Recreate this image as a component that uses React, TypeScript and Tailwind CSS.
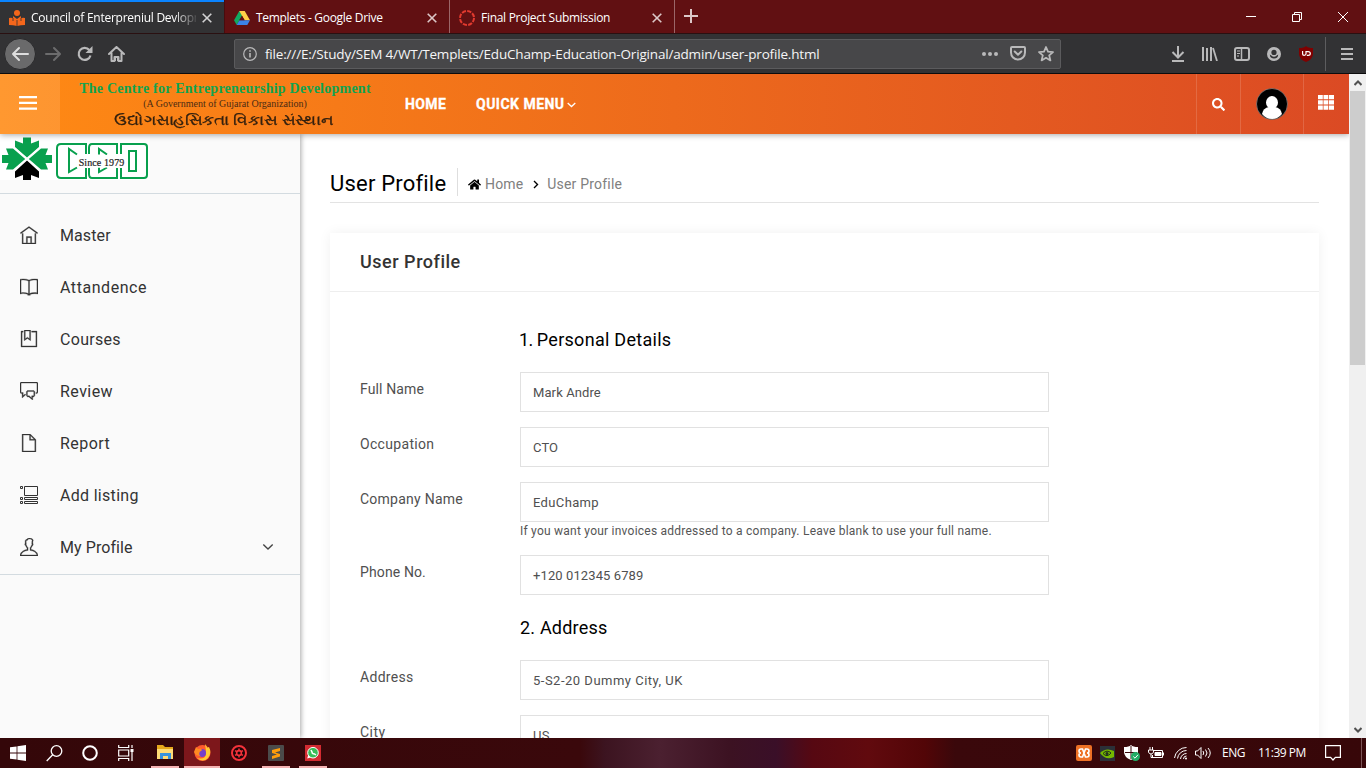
import React from "react";
import { TfiHome, TfiBook, TfiBookmarkAlt, TfiComments, TfiFile, TfiUser } from "react-icons/tfi";
import { FaHome, FaSearch } from "react-icons/fa";

function ListIcon({ className = "" }: { size?: number; className?: string }) {
  return (
    <svg className={className} width="18" height="18" viewBox="0 0 18 18" fill="none" stroke="currentColor" strokeWidth="1">
      <path d="M4.500 .5h13v9h-13zM.5 .5h2v2h-2zM.5 11.500h2v2h-2zM4.500 11.500h13v2h-13zM.5 15.500h2v2h-2zM4.500 15.500h13v2h-13z" />
    </svg>
  );
}

const nav = [
  { label: "Master", Icon: TfiHome, cls: "tracking-[0.1px]" },
  { label: "Attandence", Icon: TfiBook, cls: "tracking-[0.55px]" },
  { label: "Courses", Icon: TfiBookmarkAlt, cls: "tracking-[0.3px]" },
  { label: "Review", Icon: TfiComments, cls: "tracking-[0.45px]" },
  { label: "Report", Icon: TfiFile, cls: "tracking-[0.45px]" },
  { label: "Add listing", Icon: ListIcon, cls: "tracking-[0.3px]" },
  { label: "My Profile", Icon: TfiUser, cls: "tracking-[0.08px]" },
];

function X({ className = "" }: { className?: string }) {
  return (
    <svg className={className} width="10" height="10" viewBox="0 0 10 10" stroke="currentColor" strokeWidth="1.6">
      <path d="M.7.7l8.6 8.6M9.3.7L.7 9.3" />
    </svg>
  );
}

function Tabs() {
  return (
    <div className="flex h-[33px] bg-[#611012] text-[12px] leading-none text-white">
      <div className="flex w-[224px] items-center border-t-2 border-[#0a84ff] bg-[#323234] pl-[9px]">
        <svg width="16" height="16" viewBox="0 0 16 16" fill="#f4661b">
          <circle cx="8" cy="3" r="3" />
          <path d="M0 8q4-.8 8 2 4-2.800 8-2v7q-4 0-8 1-4-1-8-1z" />
          <path d="M4 6l4 3 4-3v4l-4 2-4-2z" />
          <path d="M8 10v6M4 8v3M12 8v3" stroke="#323234" strokeWidth=".8" />
        </svg>
        <span className="ml-1.5 w-[165px] overflow-hidden whitespace-nowrap py-1 tracking-[-0.26px] [mask-image:linear-gradient(to_right,black_143px,transparent_168px)]">Council of Enterpreniul Devlopment</span>
        <X className="ml-[6px] text-[#d2d2d3]" />
      </div>
      <div className="flex w-[225px] items-center border-l border-[#4a0b0d] pl-[9px] pt-0.5">
        <svg width="16" height="14" viewBox="0 0 16 14">
          <path d="M5.300 0h5.400L5.500 9 2.700 14 0 9.300z" fill="#11a861" />
          <path d="M5.300 0h5.400L16 9.300h-5.400z" fill="#ffcf48" />
          <path d="M5.400 9.300H16L13.300 14H2.700z" fill="#3b82e8" />
          <path d="M5.300 9.300L8 4.700l2.700 4.600z" fill="#611012" />
        </svg>
        <span className="ml-1.5 w-[171px] whitespace-nowrap tracking-[-0.3px]">Templets - Google Drive</span>
        <X className="text-[#dcc8c8]" />
      </div>
      <div className="flex w-[226px] items-center border-x border-[#9b6668] pl-[9px] pt-0.5">
        <svg width="16" height="16" viewBox="0 0 16 16" fill="none">
          <circle cx="8" cy="8" r="7" stroke="#e23a2f" strokeWidth="2" strokeDasharray="4.200 1.298" />
        </svg>
        <span className="ml-1.5 w-[171px] whitespace-nowrap tracking-[-0.29px]">Final Project Submission</span>
        <X className="text-[#dcc8c8]" />
      </div>
      <svg className="ml-[9px] mt-[9px]" width="14" height="14" viewBox="0 0 14 14" stroke="#dcc8c8" strokeWidth="2"><path d="M7 0v14M0 7h14" /></svg>
      <div className="ml-auto flex items-center gap-[36px] pr-[18px] pt-px">
        <svg width="10" height="10" stroke="white"><path d="M0 4.500h10" /></svg>
        <svg width="10" height="10" fill="none" stroke="white"><path d="M.5 2.500h7v7h-7zM2.500 2.500v-2h7v7h-2" /></svg>
        <svg width="10" height="10" stroke="white"><path d="M0 0l10 10M10 0L0 10" /></svg>
      </div>
    </div>
  );
}

function Toolbar() {
  return (
    <div className="flex h-[41px] items-center border-b border-t border-b-[#0c0c0d] border-t-[#2a1011] bg-[#323234] text-[#b9b9ba]">
      <div className="ml-1 flex size-8 items-center justify-center rounded-full border border-[#29292b] bg-[#6a6a6b] text-[#dedede]">
        <svg width="18" height="16" viewBox="0 0 18 16" fill="none" stroke="currentColor" strokeWidth="2" strokeLinecap="round" strokeLinejoin="round"><path d="M17 8H2M8 2L2 8l6 6" /></svg>
      </div>
      <svg className="ml-[9px] text-[#6c6c6d]" width="16" height="16" viewBox="0 0 16 16" fill="none" stroke="currentColor" strokeWidth="2" strokeLinecap="round" strokeLinejoin="round"><path d="M1 8h13M9 2l6 6-6 6" /></svg>
      <svg className="ml-4" width="16" height="16" viewBox="0 0 16 16" fill="none" stroke="currentColor" strokeWidth="2.200"><path d="M13.500 9.500A6 6 0 1 1 12.300 4" /><path d="M15.500 0v7H8.500z" fill="currentColor" stroke="none" /></svg>
      <svg className="ml-[15px]" width="17" height="16" viewBox="0 0 17 16" fill="none" stroke="currentColor" strokeWidth="2" strokeLinejoin="round"><path d="M1 8l7.500-7L16 8M3.500 7v8h3v-4h4v4h3V7" strokeLinecap="round" /><path d="M7.500 15v-4h2v4" strokeWidth="1" /></svg>
      <div className="ml-[109px] flex h-[30px] w-[827px] items-center rounded-[2px] border border-[#5b5b5d] bg-[#474749] pl-2">
        <svg width="14" height="14" viewBox="0 0 14 14" fill="none" stroke="#b9b9ba" strokeWidth="1.200"><circle cx="7" cy="7" r="6.300" /><path d="M7 6v4.500M7 3.200v1.600" strokeWidth="1.600" /></svg>
        <span className="ml-[8px] w-[717px] whitespace-nowrap pt-[3px] text-[13.500px] leading-none tracking-[-0.18px] text-[#f5f5f6]">file:///E:/Study/SEM 4/WT/Templets/EduChamp-Education-Original/admin/user-profile.html</span>
        <svg width="16" height="4" fill="currentColor"><circle cx="2" cy="2" r="2" /><circle cx="8" cy="2" r="2" /><circle cx="14" cy="2" r="2" /></svg>
        <svg className="ml-3" width="16" height="15" viewBox="0 0 16 15" fill="none" stroke="currentColor" strokeWidth="2" strokeLinecap="round" strokeLinejoin="round"><path d="M2 1h12q1 0 1 1v4.500a7 7 0 0 1-14 0V2q0-1 1-1zM4.700 5.500L8 8.700l3.300-3.200" /></svg>
        <svg className="ml-3" width="16" height="16" viewBox="0 0 16 16" fill="none" stroke="currentColor" strokeWidth="1.800" strokeLinejoin="round"><path d="M8 1l2 4.600 5 .5-3.800 3.300 1.200 5L8 11.800l-4.400 2.600 1.200-5L1 6.100l5-.5z" /></svg>
      </div>
      <div className="ml-auto flex h-full items-center">
        <svg width="14" height="16" viewBox="0 0 14 16" fill="none" stroke="currentColor" strokeWidth="2"><path d="M7 0v11M1.500 6L7 11.500 12.500 6M1 15h12" /></svg>
        <svg className="ml-[17px]" width="16" height="14" viewBox="0 0 16 14" stroke="currentColor" strokeWidth="2"><path d="M1 0v14M5 1v13M9 0v14" /><path d="M11 1l4 13" strokeWidth="1.800" /></svg>
        <svg className="ml-4" width="16" height="14" viewBox="0 0 16 14" fill="none" stroke="currentColor"><rect x="1" y="1" width="14" height="12" rx="2" strokeWidth="2" /><path d="M7.500 1v12" strokeWidth="1.500" /><path d="M3 4h3M3 6.500h3M3 9h2" /></svg>
        <svg className="ml-[17px]" width="14" height="14" viewBox="0 0 14 14"><circle cx="7" cy="7" r="7" fill="currentColor" /><circle cx="7" cy="5.400" r="2.600" fill="#323234" /><path d="M2.800 7.500a4.200 4 0 0 0 8.400 0l-1.500.9a4 4 0 0 1-5.400 0z" fill="#323234" /></svg>
        <div className="relative ml-[18px] flex h-4 w-[14px] items-center justify-center">
          <svg className="absolute" width="14" height="16" viewBox="0 0 14 16"><path d="M7 0q2 2 7 2v6q0 5-7 8-7-3-7-8V2q5 0 7-2z" fill="#800000" /></svg>
          <svg className="relative" width="9" height="5" viewBox="0 0 9 5" fill="none" stroke="white" strokeWidth="1.200"><path d="M.6 0v3q0 1.300 1.600 1.300T4 3V0M4.600.600h1.500Q8.300.600 8.300 2.500T6.100 4.400H4.800" /></svg>
        </div>
        <div className="ml-[12px] h-[34px] w-px bg-[#5d5d5f]" />
        <svg className="ml-[15px] mr-[13px]" width="12" height="12" stroke="currentColor" strokeWidth="2"><path d="M0 1h12M0 6h12M0 11h12" /></svg>
      </div>
    </div>
  );
}

function Header() {
  return (
    <header className="relative z-10 flex h-[60px] shrink-0 bg-[linear-gradient(90deg,#ff8a14,#db4a24)] text-white shadow-[0_1px_6px_rgba(0,0,0,0.35)]">
      <div className="flex w-[60px] items-center justify-center bg-white/12 pb-[3px] pr-1">
        <svg width="18" height="14" fill="white"><path d="M0 0h18v2.300H0zM0 5.700h18V8H0zM0 11.500h18v2.300H0z" /></svg>
      </div>
      <div className="flex w-[330px] flex-col items-center whitespace-nowrap font-['Liberation_Serif'] leading-none">
        <div className="mt-[7px] text-[14px] font-bold leading-[16px] tracking-[0.24px] text-[#12a350]">The Centre for Entrepreneurship Development</div>
        <div className="mt-px text-[10px] leading-[11px] text-[#4b2b14]">(A Government of Gujarat Organization)</div>
        <div className="mr-[3px] mt-[2px] scale-x-[1.215] font-sans text-[14px] leading-[18px] text-[#33200f] [-webkit-text-stroke:0.25px_#33200f]">ઉદ્યોગસાહસિકતા વિકાસ સંસ્થાન</div>
      </div>
      <div className="flex items-center pl-[15px] font-[Roboto] text-[14px] font-bold">
        <span className="w-[71px] tracking-[0.4px] [-webkit-text-stroke:0.3px_white]">HOME</span>
        <span className="w-[91px] tracking-[0.48px] [-webkit-text-stroke:0.3px_white]">QUICK MENU</span>
        <svg className="mt-px" width="9" height="6" fill="none" stroke="white" strokeWidth="1.300"><path d="M.7 1L4.500 4.500 8.300 1" /></svg>
      </div>
      <div className="ml-auto flex">
        <div className="flex w-[44px] items-center justify-center border-l border-white/15"><FaSearch size={13} /></div>
        <div className="flex w-[63px] items-center justify-center border-l border-white/15">
          <svg className="mr-px" width="32" height="32" viewBox="0 0 32 32"><circle cx="16" cy="16" r="15.500" fill="#000" stroke="#999" strokeWidth=".6" /><ellipse cx="16" cy="14.500" rx="6" ry="6.500" fill="#fff" /><path d="M6 26q1-6 7-7h6q6 1 7 7-4 5-10 5T6 26z" fill="#fff" /></svg>
        </div>
        <div className="flex w-[46px] items-center justify-center border-l border-white/15">
          <svg className="mb-[3px] mr-px" width="16" height="15" viewBox="0 0 16 15" fill="white"><path d="M0 0h4.800v4.300H0zM5.500 0h4.800v4.300H5.500zM11 0h5v4.300h-5zM0 5.300h4.800v4.200H0zM5.500 5.300h4.800v4.200H5.500zM11 5.300h5v4.200h-5zM0 10.500h4.800v4.300H0zM5.500 10.500h4.800v4.300H5.500zM11 10.500h5v4.300h-5z" /></svg>
        </div>
      </div>
    </header>
  );
}

function Logo() {
  return (
    <svg width="150" height="46" viewBox="0 0 150 46">
      <rect width="150" height="46" fill="#fff" />
      <g transform="translate(27 25)">
        <g fill="#09a04e">
          <path d="M0-1.500L-12-12V-18.500l8 3V-21.500h8v6l8-3v6.500z" />
          <path d="M-1.800 0L-14-10.500H-21l2.500 6.500H-25v8h6.500l-2.500 6.500h7z" />
          <path d="M1.800 0L14-10.500H21l-2.500 6.500H25v8h-6.500l2.500 6.500h-7z" />
        </g>
        <path d="M0 1.500L12 12.500V19l-8-3v5.500H-4V16l-8 3v-6.500z" fill="#000" />
        <path d="M-13-11.500L13 11.500M13-11.500L-13 11.500" stroke="#fff" strokeWidth="1.200" />
      </g>
      <g fill="none" stroke="#09a04e" strokeWidth="2">
        <path d="M86 20V10H61q-4 0-4 4v26q0 4 4 4h25V34M117 20V10H92q-3 0-3 4v6M89 34v6q0 4 3 4h25V34M121 20V10h23q3 0 3 3v28q0 3-3 3h-23V34M129 17h7v20h-7z" />
        <path d="M77 20.500L69 15v23l8-4.500M107 20.500L99 15v5.500M99 33.500V38l8-4.500" />
      </g>
      <rect x="77" y="21" width="49" height="12.500" fill="#fff" />
      <text x="101.500" y="31.500" textAnchor="middle" fill="#222" className="font-['Liberation_Serif'] text-[10px] tracking-[0.1px]" stroke="#222" strokeWidth=".2">Since 1979</text>
    </svg>
  );
}

function Sidebar() {
  return (
    <aside className="relative w-[300px] shrink-0 bg-[#fafafa] shadow-[1px_0_5px_rgba(0,0,0,0.35)]">
      <div className="h-[60px] border-b border-[#d3dbe0]"><Logo /></div>
      <nav className="border-b border-[#d3dbe0] pb-px pt-[15px]">
        {nav.map(({ label, Icon, cls }, i) => (
          <div key={label} className="flex h-[52px] items-center pl-[20px] font-[Roboto] text-[16px] text-[#333]">
            <Icon size={18} className={i === 5 ? "mb-px" : "mb-px stroke-current [stroke-width:0.3px]"} />
            <span className={`ml-[22px] pt-px ${cls}`}>{label}</span>
            {i === 6 && <svg className="ml-auto mr-[26px]" width="12" height="8" fill="none" stroke="#444" strokeWidth="1.400"><path d="M1.300 1.500L6 6l4.700-4.500" /></svg>}
          </div>
        ))}
      </nav>
    </aside>
  );
}

function Row({ label, value, hint, trk = "tracking-[0.12px]", vtrk = "tracking-[0.1px]" }: { label: string; value: string; hint?: string; trk?: string; vtrk?: string }) {
  return (
    <div className="mb-[15px] flex">
      <div className={`w-[160px] pt-[7px] text-[14px] leading-5 text-[#505050] ${trk}`}>{label}</div>
      <div className="w-[529px]">
        <div className={`flex h-[40px] items-center border border-[#e1e1e1] pl-3 pt-px text-[13px] text-[#505050] ${vtrk}`}>{value}</div>
        {hint && <div className="h-[18px] whitespace-nowrap text-[12px] leading-[18px] tracking-[0.235px] text-[#555]">{hint}</div>}
      </div>
    </div>
  );
}

function Main() {
  return (
    <main className="flex-1 overflow-hidden px-[30px] pt-[34px] font-[Roboto]">
      <div className="flex h-[35px] items-start border-b border-[#e3e3e3]">
        <h1 className="w-[127px] whitespace-nowrap text-[22px] leading-[31px] tracking-[0.2px] text-black">User Profile</h1>
        <div className="flex h-[28px] items-center border-l border-[#dedede] pl-[10px] pt-1 text-[14px] text-[#808080]">
          <FaHome size={13} color="#000" />
          <span className="ml-1 pt-px tracking-[0.15px]">Home</span>
          <svg className="ml-[10px] mr-2" width="6" height="9" fill="none" stroke="#000" strokeWidth="1.400"><path d="M1 1l3.500 3.500L1 8" /></svg>
          <span className="pt-px tracking-[0.2px]">User Profile</span>
        </div>
      </div>
      <section className="mt-[30px] h-[700px] bg-white shadow-[0_0_12px_rgba(0,0,0,0.06)]">
        <h2 className="h-[59px] border-b border-[#eee] pl-[30px] text-[18px] font-medium leading-[57px] tracking-[0.52px] text-[#333]">User Profile</h2>
        <div className="pl-[30px] pt-[35px]">
          <h3 className="mb-[19px] pl-[159px] text-[18px] leading-[26px] text-black"><span className="tracking-[-0.5px]">1. </span><span className="tracking-[0.28px]">Personal Details</span></h3>
          <Row label="Full Name" value="Mark Andre" />
          <Row label="Occupation" value="CTO" trk="tracking-[0.32px]" />
          <Row label="Company Name" value="EduChamp" trk="tracking-[0.25px]" vtrk="tracking-[0.35px]" hint="If you want your invoices addressed to a company. Leave blank to use your full name." />
          <Row label="Phone No." value="+120 012345 6789" />
          <h3 className="mb-[19px] mt-[20px] pl-[160px] text-[18px] leading-[26px] tracking-[0.2px] text-black">2. Address</h3>
          <Row label="Address" value="5-S2-20 Dummy City, UK" trk="tracking-[0.3px]" vtrk="tracking-[0.5px]" />
          <Row label="City" value="US" trk="tracking-[0.5px]" vtrk="tracking-[0.3px]" />
        </div>
      </section>
    </main>
  );
}

function Taskbar() {
  return (
    <div className="flex h-[30px] bg-[linear-gradient(90deg,#340709_0,#3a080b_580px,#3c1420_605px,#4b2030_660px,#3c1222_730px,#3a0f28_776px,#560812_812px,#610a0e_868px,#520507_925px,#3a080b_955px,#370709_1366px)] text-white">
      <div className="flex w-[148px] items-center pl-[10px]">
        <svg width="16" height="16" fill="white"><path d="M0 2.300L6.600 1.400v6.200H0zM7.400 1.300L16 0v7.600H7.400zM0 8.400h6.600v6.200L0 13.700zM7.400 8.400H16V16l-8.600-1.200z" /></svg>
        <svg className="ml-5" width="17" height="17" fill="none" stroke="white" strokeWidth="1.300"><circle cx="10.500" cy="6" r="5.300" /><path d="M6.700 9.800L.7 16" /></svg>
        <svg className="ml-[19px]" width="16" height="16" fill="none" stroke="white" strokeWidth="2"><circle cx="8" cy="8" r="6.800" /></svg>
        <svg className="ml-5" width="17" height="16" fill="none" stroke="white" strokeWidth="1.200"><path d="M.7 0v2.500h10V0M.7 16v-2.500h10V16M.7 5h10v6H.7zM14 0v3M14 7v9" /><path d="M12.500 4h3v3h-3z" fill="white" stroke="none" /></svg>
      </div>
      <div className="flex w-9 items-center justify-center pl-[3px] pr-[5px]">
        <div className="flex h-full w-7 items-center justify-center border-b-2 border-[#f5b3b3] pt-px"><svg width="17" height="15"><path d="M0 0h6l2 2h8v12H0z" fill="#e6a91c" /><path d="M0 4h16v10H0z" fill="#ffdc75" /><path d="M3 14V8h11v6h-3v-3H6v3z" fill="#3793dc" /></svg></div>
      </div>
      <div className="flex w-9 items-center justify-center border-b-2 border-[#f5b3b3] bg-[#7d171b]">
        <svg width="17" height="17" viewBox="0 0 17 17"><circle cx="8.500" cy="9" r="8" fill="#ff5b2e" /><path d="M11 0q2 2 2 4l2-1q3 6-1 11-5 5-11 0 8 2 9-4 0-5-1-10z" fill="#ffcb31" /><circle cx="8" cy="9" r="4" fill="#7541c9" /><path d="M0 8l2-5 2 2 3-.5q2 2-1 3-2 3 1 5-6-1-7-4.500z" fill="#ff8a22" /></svg>
      </div>
      <div className="flex w-[38px] items-center justify-center">
        <svg width="16" height="16" viewBox="0 0 16 16" fill="none" stroke="#f4323a"><circle cx="8" cy="8" r="7" strokeWidth="2" fill="#1c0508" /><circle cx="8" cy="8" r="2.400" strokeWidth="1.600" /><path d="M8 3.500v2M8 10.500v2M4 5.700l1.700 1M10.300 9.300l1.700 1M12 5.700l-1.700 1M5.700 9.300l-1.700 1" strokeWidth="1.500" /></svg>
      </div>
      <div className="ml-1 flex w-7 items-center justify-center border-b-2 border-[#f5b3b3] pt-[2px]"><svg width="16" height="16"><rect width="16" height="16" rx="1" fill="#4b4b4b" /><path d="M4 5l8-2v3l-5 1.400L12 9v2.500L4 14v-3l5-1.400L4 8z" fill="#ff9c0c" /></svg></div>
      <div className="ml-[9px] flex w-7 items-center justify-center border-b-2 border-[#f5b3b3] pt-[2px]"><svg width="16" height="16"><rect width="16" height="16" fill="#d32b31" /><circle cx="8" cy="7.700" r="5.300" fill="#38bd58" stroke="#fff" /><path d="M2.200 13.600l1-3.600 2.500 2.500z" fill="#fff" /><path d="M6 5l1 2q0 2 2.500 2l1.500 1" stroke="#fff" strokeWidth="1.500" fill="none" /></svg></div>
      <div className="ml-auto flex items-center whitespace-nowrap text-[12px]">
        <div className="flex size-4 items-center justify-center rounded-[2px] bg-[#ee7125]"><svg width="12" height="10" fill="none" stroke="white"><path d="M3 1h1.500l3 8H9q2 0 2-2T9 5q2 0 2-2T9 1H7.500l-3 8H3Q1 9 1 7t2-2Q1 5 1 3t2-2z" strokeWidth="1.600" /></svg></div>
        <svg className="ml-2" width="15" height="15"><rect width="15" height="15" fill="#2b3038" /><path d="M0 7q6-6 14-2v6q-8 4-14-4z" fill="#76b900" /><path d="M3 7.500Q7 3 11 7q-4 5-8 .5z" fill="none" stroke="#21301b" /><circle cx="7" cy="7.500" r="1.500" fill="#21301b" /></svg>
        <svg className="ml-[9px]" width="17" height="17"><path d="M7 0q2 2 7 2v5q0 5-7 8-7-3-7-8V2q5 0 7-2z" fill="white" /><path d="M7 1v13M1 7.500h12" stroke="#3a080b" /><circle cx="11.500" cy="11.500" r="4.500" fill="#21ad65" /><path d="M9.300 11.500l1.700 1.700 3-3.400" stroke="white" fill="none" /></svg>
        <svg className="ml-[7px]" width="17" height="13" fill="none" stroke="white"><path d="M5.500 3.500h9v7H4.500V8M2 0v3M4.500 0v3M.5 3h5v2Q5 7 3 7T.5 5zM3 7v3.500h2M15.500 5.500v3" /><path d="M7 5.500h6v3H7z" fill="white" /></svg>
        <svg className="ml-[9px]" width="14" height="14" fill="none" stroke="white"><path d="M.5 12A12 12 0 0 1 12.500 1.500M3.500 12.500A9 9 0 0 1 12.500 4.500M6.500 13A6 6 0 0 1 12.500 7.500M9.500 13A3 3 0 0 1 12.500 10" /><circle cx="12" cy="12.500" r="1" fill="white" stroke="none" /></svg>
        <svg className="ml-[7px]" width="17" height="14" fill="none" stroke="white"><path d="M.5 5h2L6 1.500v11L2.500 9h-2zM8 5q1.500 2 0 4M10.500 3.500q3 3.500 0 7M13 2q4.500 5 0 10" /></svg>
        <span className="ml-[10px] w-[24px] tracking-[-0.45px]">ENG</span>
        <span className="ml-[12px] w-[49px] tracking-[-0.5px]">11:39 PM</span>
        <svg className="ml-[18px]" width="16" height="16" fill="none" stroke="white" strokeWidth="1.200"><path d="M.6.600h14.800v11.800h-5L8 15l-2.400-2.600h-5z" /></svg>
        <div className="ml-5 mr-[4px] h-full w-px bg-[#7b5355]" />
      </div>
    </div>
  );
}

export default function App() {
  return (
    <div className="flex h-[768px] w-[1366px] flex-col overflow-hidden bg-white font-['Open_Sans',sans-serif]">
      <Tabs />
      <Toolbar />
      <div className="flex h-[664px]">
        <div className="flex w-[1349px] flex-col overflow-hidden">
          <Header />
          <div className="flex min-h-0 flex-1"><Sidebar /><Main /></div>
        </div>
        <div className="flex w-[17px] flex-col items-center justify-between bg-[#f0f0f0]">
          <div className="flex h-[17px] items-center"><svg width="8" height="6" fill="none" stroke="#505050" strokeWidth="2"><path d="M.5 5L4 1.500 7.500 5" /></svg></div>
          <div className="h-[274px] w-[15px] bg-[#cdcdcd]" />
          <div className="flex flex-1 items-end pb-[5px]"><svg width="8" height="6" fill="none" stroke="#505050" strokeWidth="2"><path d="M.5 1L4 4.500 7.500 1" /></svg></div>
        </div>
      </div>
      <Taskbar />
    </div>
  );
}
